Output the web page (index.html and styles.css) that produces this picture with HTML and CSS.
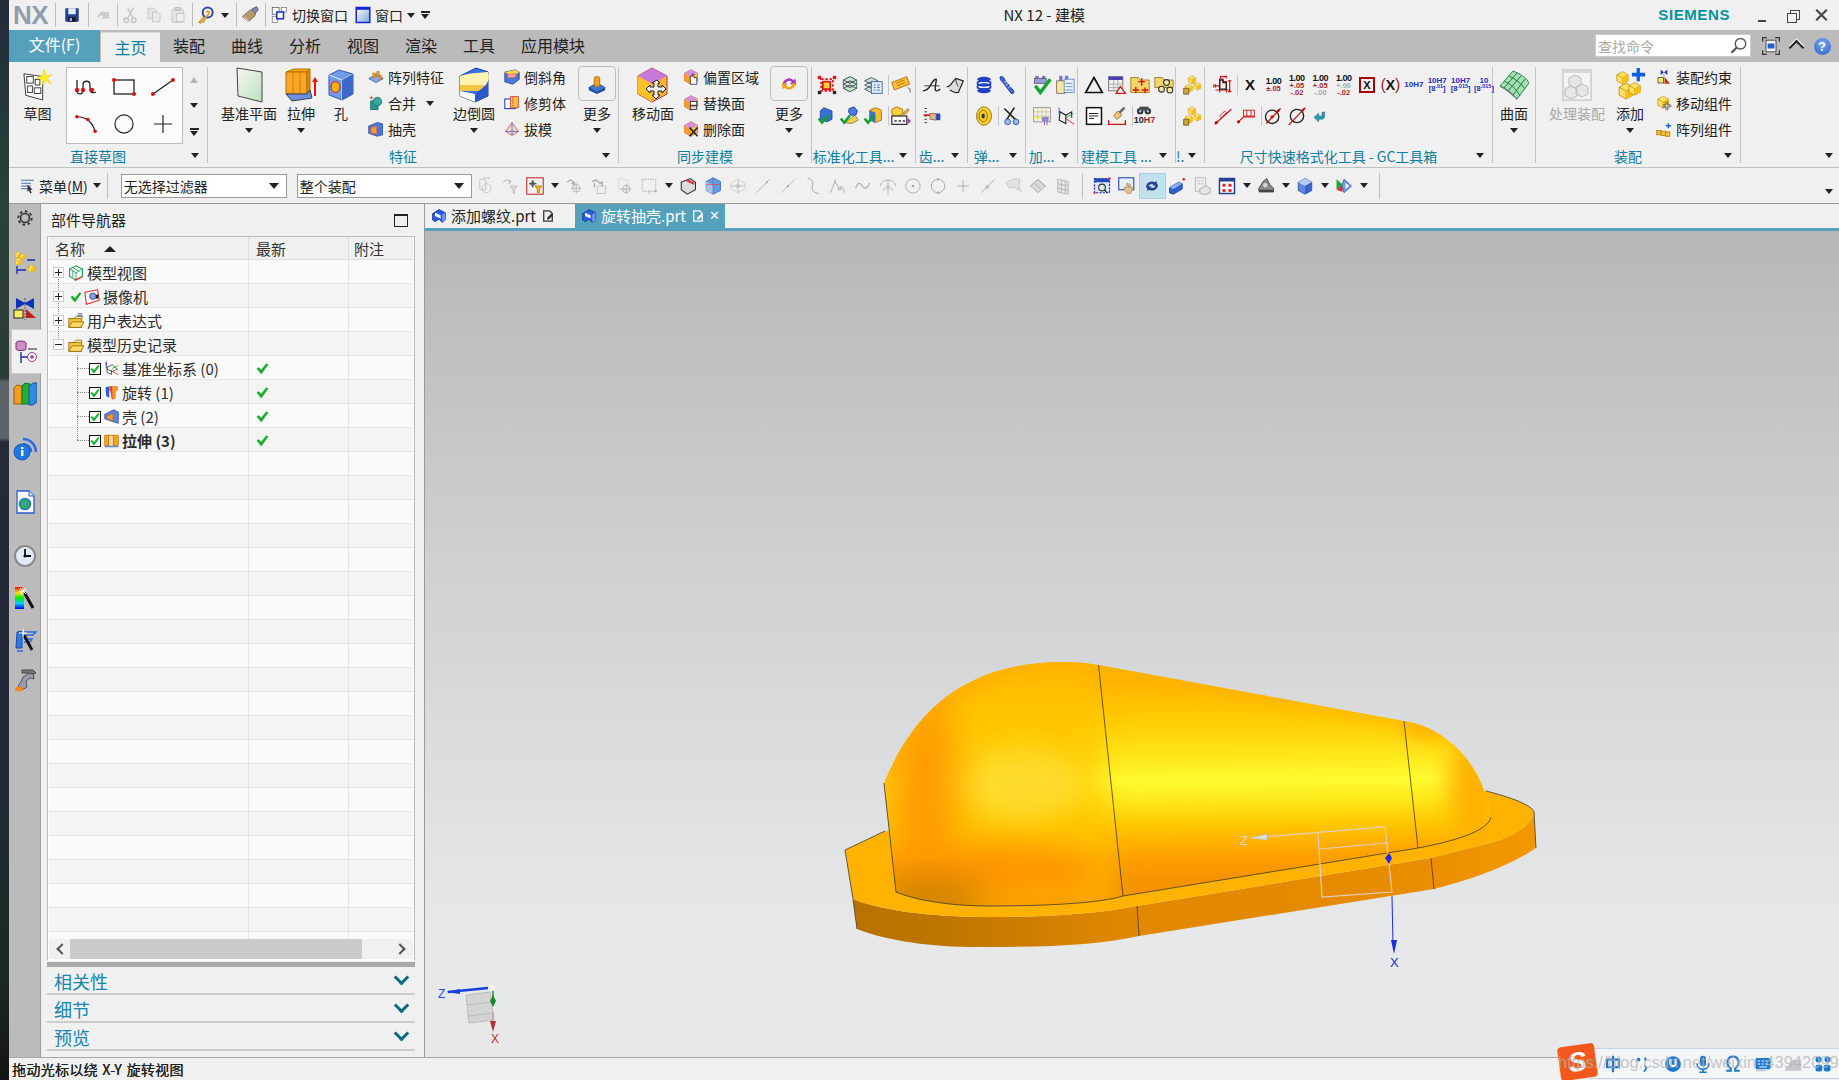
FILE: index.html
```html
<!DOCTYPE html>
<html lang="zh">
<head>
<meta charset="utf-8">
<title>NX 12 - 建模</title>
<link rel="stylesheet" href="styles.css">
</head>
<body>
<svg class="defs" aria-hidden="true">
<defs>
<linearGradient id="gPlane" x1="0" y1="0" x2="1" y2="1"><stop offset="0" stop-color="#f4f8f0"/><stop offset="1" stop-color="#bfe0c0"/></linearGradient>
<linearGradient id="gWin" x1="0" y1="0" x2="1" y2="1"><stop offset="0" stop-color="#fff"/><stop offset="1" stop-color="#7fa6d8"/></linearGradient>
</defs>
<symbol id="save" viewBox="0 0 24 24"><rect x="3" y="3" width="18" height="18" rx="1" fill="#24418f"/><rect x="7" y="3" width="10" height="8" fill="#e3ebf7"/><rect x="7" y="15" width="10" height="6" fill="#16181f"/><rect x="9" y="16" width="3" height="4" fill="#9fb0cc"/></symbol>
<symbol id="undo" viewBox="0 0 24 24"><path d="M6 15c0-6 6-9 11-5l2-2v8h-8l3-3c-3-2-6-1-8 2z" fill="#cfcfcf" stroke="#bbb"/></symbol>
<symbol id="cut" viewBox="0 0 24 24"><path d="M17 2L9 16M9 3l7 13" fill="none" stroke="#c4c4c4" stroke-width="2"/><circle cx="7" cy="19" r="3" fill="none" stroke="#c4c4c4" stroke-width="2"/><circle cx="17" cy="19" r="3" fill="none" stroke="#c4c4c4" stroke-width="2"/></symbol>
<symbol id="copy" viewBox="0 0 24 24"><path d="M4 3h8l3 3v11H4z" fill="#e6e6e6" stroke="#bdbdbd"/><path d="M10 8h7l3 3v10H10z" fill="#e9e9e9" stroke="#bdbdbd"/></symbol>
<symbol id="paste" viewBox="0 0 24 24"><rect x="4" y="4" width="15" height="18" rx="2" fill="#e4e4e4" stroke="#bdbdbd"/><rect x="8" y="2" width="7" height="4" fill="#d0d0d0" stroke="#b5b5b5"/><rect x="10" y="10" width="10" height="11" fill="#efefef" stroke="#bdbdbd"/></symbol>
<symbol id="touch" viewBox="0 0 24 24"><circle cx="14" cy="9" r="6" fill="none" stroke="#2b4aa8" stroke-width="2.4"/><path d="M12 9c2-3 5-1 3 2l-5 5" fill="none" stroke="#e0a81a" stroke-width="2"/><path d="M9 14l-6 7 3 1 2-2 1 1 2-4z" fill="#e8b62b" stroke="#8a6510" stroke-width=".7"/></symbol>
<symbol id="eraser" viewBox="0 0 24 24"><path d="M3 14l9-8 7 1-1 6-8 7z" fill="#b89a6a" stroke="#666"/><path d="M14 5l6-3 2 4-4 4z" fill="#7a8fb8" stroke="#555"/><path d="M5 15l6 5" stroke="#fff" /></symbol>
<symbol id="switch" viewBox="0 0 24 24"><rect x="3" y="2" width="9" height="9" fill="#fff" stroke="#555"/><rect x="15" y="2" width="7" height="6" fill="#fff" stroke="#777"/><rect x="3" y="14" width="7" height="8" fill="#fff" stroke="#777"/><rect x="9" y="8" width="9" height="9" fill="#fff" stroke="#1730c8" stroke-width="2"/></symbol>
<symbol id="winic" viewBox="0 0 24 24"><rect x="3" y="2" width="18" height="20" fill="url(#gWin)" stroke="#1226d0" stroke-width="2"/><rect x="3" y="2" width="18" height="3" fill="#1226d0"/></symbol>
<symbol id="sketch" viewBox="0 0 32 34"><path d="M1 5l20 3v25L3 28z" fill="#fff" stroke="#333"/><rect x="4" y="8" width="7" height="7" fill="#fff" stroke="#333"/><rect x="13" y="11" width="5" height="6" fill="#fff" stroke="#333"/><rect x="5" y="18" width="5" height="7" fill="#fff" stroke="#333"/><rect x="12" y="20" width="7" height="6" fill="#fff" stroke="#333"/><path d="M23 0l1 7 7-1-5 4 4 6-6-4-3 5-1-6-6-1 6-3z" fill="#ffee22" stroke="#e8c800" stroke-width=".5"/></symbol>
<symbol id="spline" viewBox="0 0 24 18"><path d="M3 2v11c0 4 6 4 6-1V7c0-5 7-5 7 0v5c0 3 4 3 6 2" fill="none" stroke="#222" stroke-width="1.3"/><g fill="#d11"><circle cx="3" cy="12" r="2.2"/><circle cx="9" cy="12" r="2.2"/><circle cx="18" cy="12" r="2.2"/></g></symbol>
<symbol id="srect" viewBox="0 0 24 18"><rect x="2" y="2" width="20" height="14" fill="none" stroke="#222" stroke-width="1.3"/><circle cx="2" cy="2" r="2" fill="#d11"/><circle cx="22" cy="16" r="2" fill="#d11"/></symbol>
<symbol id="sline" viewBox="0 0 24 18"><path d="M2 16L22 2" stroke="#222" stroke-width="1.3"/><circle cx="2" cy="16" r="2" fill="#d11"/><circle cx="22" cy="2" r="2" fill="#d11"/></symbol>
<symbol id="sarc" viewBox="0 0 24 22"><path d="M2 3c10 0 18 6 20 17" fill="none" stroke="#222" stroke-width="1.3"/><g fill="#d11"><circle cx="2" cy="3" r="2"/><circle cx="14" cy="6" r="2"/><circle cx="22" cy="19" r="2"/></g></symbol>
<symbol id="scirc" viewBox="0 0 24 22"><ellipse cx="12" cy="11" rx="10" ry="10" fill="none" stroke="#222" stroke-width="1.3"/></symbol>
<symbol id="splus" viewBox="0 0 24 22"><path d="M12 1v20M2 11h20" stroke="#222" stroke-width="1.3"/></symbol>
<symbol id="plane" viewBox="0 0 28 36"><path d="M2 1l25 4v30L3 29z" fill="url(#gPlane)" stroke="#444"/></symbol>
<symbol id="extr" viewBox="0 0 34 36"><path d="M2 5l8-3h16l-3 3z" fill="#f6a71c" stroke="#b76d00"/><path d="M2 5h21v22H2z" fill="#f9a825" stroke="#b76d00"/><path d="M9 5v22M16 5v22" stroke="#d57d00"/><path d="M23 5l3-3v21l-3 4z" fill="#e08a10" stroke="#b76d00"/><path d="M2 27h21l3-4 2 8-20 3z" fill="#6f8fe0" stroke="#345"/><path d="M31 29V13" stroke="#e11" stroke-width="2"/><path d="M28 15l3-5 3 5z" fill="#e11"/></symbol>
<symbol id="hole" viewBox="0 0 26 32"><path d="M1 6l10-5 14 4v20l-11 6-13-5z" fill="#6f9be8" stroke="#2f59b8"/><path d="M1 6l13 5 11-6M14 11v20" fill="none" stroke="#dfe9fb"/><path d="M14 11l11-6v20l-11 6z" fill="#3c68c8"/><ellipse cx="7.500" cy="18" rx="4.500" ry="5.500" fill="#ffb000" stroke="#d11"/></symbol>
<symbol id="blend" viewBox="0 0 32 36"><path d="M2 9L18 1l12 4v24l-13 6-15-6z" fill="#3c6fe0" stroke="#1b3fae"/><path d="M2 9c10-3 16-3 28-4 2 7 0 10-3 14l-25-1z" fill="#fff3b0"/><path d="M2 18h25l-4 6H2z" fill="#f5c542"/><path d="M2 24l15 3v8L2 29z" fill="#fff"/><path d="M17 27l10-8 3-2v12l-13 6z" fill="#2b58c9"/></symbol>
<symbol id="pat" viewBox="0 0 20 20"><path d="M1 12l9-5 9 5-9 5z" fill="#8fa8df" stroke="#36529f"/><path d="M6 5h3v6H6zM11 3h3v6h-3zM14 8h3v5h-3z" fill="#f59f1a" stroke="#a96500" stroke-width=".6"/></symbol>
<symbol id="unite" viewBox="0 0 20 24"><rect x="2" y="9" width="11" height="13" fill="#1f9a92" stroke="#0b5c56"/><circle cx="12" cy="10" r="6.500" fill="#35a89f" stroke="#0b5c56"/><path d="M3 1v6M0 4h6" stroke="#e11"/></symbol>
<symbol id="shell" viewBox="0 0 22 22"><path d="M1 7l12-5 7 2v15l-7 2-12-4z" fill="#4b78d8" stroke="#23408e"/><path d="M4 9l8-2v11l-8-2z" fill="#f59b2a" stroke="#b66"/></symbol>
<symbol id="cham" viewBox="0 0 20 20"><path d="M1 4l13-3 5 3v9l-8 6-10-3z" fill="#4b78d8" stroke="#1e3f9a"/><path d="M1 4l13-3 5 3-9 5z" fill="#ffd24a"/><path d="M4 7l12-1-2 5H5z" fill="#f7a6a6" stroke="#d33" stroke-width=".6"/></symbol>
<symbol id="trim" viewBox="0 0 20 20"><rect x="1" y="5" width="13" height="12" fill="#fff" stroke="#2548c8" stroke-width="1.400"/><path d="M8 2h10v14H8z" fill="#f7c04a" stroke="#c44" stroke-width="1.100"/><path d="M11 3v12" stroke="#d33" stroke-dasharray="2 1"/></symbol>
<symbol id="draft" viewBox="0 0 20 20"><path d="M10 2L2 13l8 5 8-5z" fill="#f7d9c7" stroke="#d44"/><path d="M10 2v16" stroke="#36c"/><path d="M2 13h16" stroke="#36c"/></symbol>
<symbol id="hexp" viewBox="0 0 22 22"><path d="M11 1l9 5v10l-9 5-9-5V6z" fill="#ffc547" stroke="#b57"/><path d="M2 6l9 5v10l-9-5z" fill="#ff9c20"/><path d="M11 1l9 5-9 5-9-5z" fill="#d78fd8"/></symbol>
<symbol id="hoff" viewBox="0 0 22 22"><use href="#hexp" width="22" height="22"/><path d="M10 10h3V7h2v5h4v9h-9z" fill="#fff" stroke="#111"/></symbol>
<symbol id="hrep" viewBox="0 0 22 22"><use href="#hexp" width="22" height="22"/><rect x="10" y="9" width="9" height="5" fill="#fff" stroke="#111"/><rect x="10" y="15" width="9" height="5" fill="#ddd" stroke="#111"/></symbol>
<symbol id="hdel" viewBox="0 0 22 22"><use href="#hexp" width="22" height="22"/><path d="M9 9l11 12M20 9L9 21" stroke="#222" stroke-width="2.200"/></symbol>
<symbol id="cube" viewBox="0 0 24 24"><path d="M12 2l9 5v10l-9 5-9-5V7z" fill="#ffe164" stroke="#b58400"/><path d="M3 7l9 5 9-5M12 12v10" fill="none" stroke="#b58400"/><path d="M12 12l9-5v10l-9 5z" fill="#f8be13"/></symbol>
<symbol id="move" viewBox="0 0 32 36"><path d="M15 1l15 8v18l-15 8-14-8V9z" fill="#ffb52e" stroke="#a35"/><path d="M15 1l15 8-15 8L1 9z" fill="#c779d8"/><path d="M1 9l14 8v18L1 27z" fill="#ffc028"/><path d="M20 14l3 3-2 0v4h4v-2l4 4-4 4v-2h-4v4h2l-4 4-4-4h2v-4h-4v2l-4-4 4-4v2h4v-4h-2z" transform="translate(0 -1)" fill="#f0f0f0" stroke="#222"/></symbol>
<symbol id="more1" viewBox="0 0 22 22"><path d="M2 15l9-5 9 5-9 5z" fill="#3f79d8" stroke="#1d4492"/><rect x="8" y="3" width="6" height="11" rx="2" fill="#f59f1a" stroke="#b56b00"/><path d="M2 15v3l9 4 9-4v-3l-9 5z" fill="#1d4fa8"/></symbol>
<symbol id="more2" viewBox="0 0 22 22"><path d="M4 12a7 7 0 0 1 12-5l2-2 1 7-7-1 2-2a4 4 0 0 0-7 3z" fill="#a63ab8"/><path d="M18 10a7 7 0 0 1-12 5l-2 2-1-7 7 1-2 2a4 4 0 0 0 7-3z" fill="#f0a21a"/></symbol>
<symbol id="a1" viewBox="0 0 24 24"><path d="M5 5h14v14H5z" fill="none" stroke="#e11" stroke-width="2" stroke-dasharray="3 2"/><rect x="1" y="1" width="4" height="4" fill="#e11"/><rect x="19" y="1" width="4" height="4" fill="#e11"/><rect x="1" y="19" width="4" height="4" fill="#222"/><rect x="19" y="19" width="4" height="4" fill="#222"/><rect x="7" y="8" width="9" height="9" fill="#ffd23c" stroke="#d11" stroke-width="2"/></symbol>
<symbol id="a2" viewBox="0 0 24 24"><path d="M4 6l8-4 8 4-8 4zM4 11l8-4 8 4-8 4zM4 16l8-4 8 4-8 4z" fill="#cfe4c8" stroke="#234" stroke-width="1"/><path d="M4 6v10M20 6v10" stroke="#264"/></symbol>
<symbol id="a3" viewBox="0 0 24 24"><path d="M2 7l8-4 8 4-8 4zM2 12l8-4 8 4-8 4zM2 17l8-4 8 4-8 4z" fill="#cfe0d8" stroke="#345"/><rect x="10" y="8" width="13" height="14" fill="#dfe9f7" stroke="#2f5ca8"/><path d="M13 12h2M17 12h3M13 15h2M17 15h3M13 18h2M17 18h3" stroke="#2f5ca8"/></symbol>
<symbol id="a4" viewBox="0 0 24 24"><path d="M1 9l18-7 3 9-18 7z" fill="#ffc233" stroke="#a66400"/><path d="M6 10l10-4M7 13l10-4" stroke="#a66400"/><path d="M20 15l3 2v4" stroke="#555" fill="none"/></symbol>
<symbol id="b1" viewBox="0 0 24 24"><path d="M8 2l10 4v10l-6 3-8-3V6z" fill="#3a70d8" stroke="#183f96"/><path d="M2 15l4 5 8-9" fill="none" stroke="#0ca52a" stroke-width="3"/></symbol>
<symbol id="b2" viewBox="0 0 24 24"><path d="M11 3l6-2 4 5-2 5h-6l-3-4z" fill="#4a78df" stroke="#1e3f9a"/><path d="M6 20l12-9 4 6-8 4z" fill="#ffd23c" stroke="#777"/><path d="M1 15l4 5 7-9" fill="none" stroke="#0ca52a" stroke-width="3"/></symbol>
<symbol id="b3" viewBox="0 0 24 24"><path d="M8 5l7-3 7 3v12l-7 3-7-3z" fill="#ffbe2e" stroke="#a56b00"/><path d="M8 5l7 3v12l-7-3z" fill="#3a70d8"/><path d="M2 15l4 5 7-9" fill="none" stroke="#0ca52a" stroke-width="3"/></symbol>
<symbol id="b4" viewBox="0 0 24 24"><path d="M7 1l7 3v6l-7 3-6-3V4z" fill="#ffd23c" stroke="#a56b00"/><rect x="1" y="12" width="18" height="10" fill="#fff" stroke="#222" stroke-width="1.400"/><path d="M4 17h3v2H4zM9 17h3v2H9zM14 17h3v2h-3z" fill="#333"/><path d="M20 14l4 4-4 4z" fill="#a12fb8"/><path d="M14 9l6-6 2 2-6 6z" fill="#e8a83a" stroke="#555" stroke-width=".6"/></symbol>
<symbol id="c1" viewBox="0 0 24 24"><path d="M1 19c5 0 8-4 10-8s5-6 6-6-3 14 0 14 3-1 5-2" fill="none" stroke="#222" stroke-width="1.600"/><path d="M3 13h18" stroke="#222"/></symbol>
<symbol id="c2" viewBox="0 0 24 24"><path d="M2 14c4 1 6-5 11-10l9 3-6 14c-5 1-8-2-10-3" fill="#ddd" stroke="#222" stroke-width="1.400"/><path d="M13 4c0 5 2 8 3 10" stroke="#222" fill="none"/></symbol>
<symbol id="c3" viewBox="0 0 24 24"><path d="M3 3h3M3 7h3M3 12h3M3 16h3M3 20h3" stroke="#222"/><path d="M2 11h8" stroke="#d11" stroke-width="2"/><path d="M9 9h8v8l-7-1z" fill="#e5b58c" stroke="#8a6340"/><rect x="17" y="9" width="5" height="8" fill="#2748b8"/></symbol>
<symbol id="d1" viewBox="0 0 24 24"><ellipse cx="12" cy="5" rx="8" ry="3" fill="#1f3fc8"/><ellipse cx="12" cy="10" rx="8" ry="3" fill="none" stroke="#1f3fc8" stroke-width="2"/><ellipse cx="12" cy="14" rx="8" ry="3" fill="none" stroke="#1f3fc8" stroke-width="2"/><ellipse cx="12" cy="19" rx="8" ry="3" fill="#1f3fc8"/></symbol>
<symbol id="d2" viewBox="0 0 24 24"><path d="M4 2c3-1 5 2 6 5l10 12c1 3-1 4-3 3L7 9C4 6 3 4 4 2z" fill="#3b6be0" stroke="#12308a"/><path d="M9 9l3-2M11 12l3-2M14 15l3-2" stroke="#fff"/></symbol>
<symbol id="d3" viewBox="0 0 24 24"><ellipse cx="12" cy="12" rx="9" ry="11" fill="#f7cf2a" stroke="#8a6c00"/><ellipse cx="11" cy="12" rx="5" ry="7" fill="none" stroke="#7d6100"/><ellipse cx="11" cy="12" rx="2" ry="3" fill="#333"/></symbol>
<symbol id="d4" viewBox="0 0 24 24"><path d="M4 3l14 14M16 2L7 16" stroke="#222" stroke-width="2"/><circle cx="8" cy="19" r="3.500" fill="#9cb4e8" stroke="#2f4fa8"/><circle cx="18" cy="19" r="3.500" fill="#9cb4e8" stroke="#2f4fa8"/></symbol>
<symbol id="e1" viewBox="0 0 24 24"><rect x="4" y="1" width="4" height="5" fill="#7a78c8"/><rect x="12" y="1" width="4" height="5" fill="#7a78c8"/><rect x="3" y="4" width="14" height="6" fill="#9c9ad8" stroke="#556"/><path d="M4 13l6 8L22 5" fill="none" stroke="#11a52c" stroke-width="4"/></symbol>
<symbol id="e2" viewBox="0 0 24 24"><rect x="5" y="1" width="4" height="7" fill="#7a78c8"/><rect x="12" y="1" width="4" height="7" fill="#7a78c8"/><rect x="2" y="7" width="10" height="15" fill="#ffe69a" stroke="#666"/><rect x="11" y="5" width="12" height="16" fill="#e8f0fa" stroke="#5e82c0"/><path d="M13 10h8M13 14h8M13 18h8" stroke="#5e82c0"/></symbol>
<symbol id="e3" viewBox="0 0 24 24"><rect x="2" y="2" width="20" height="17" fill="#fbf6d8" stroke="#888"/><path d="M2 7h20M2 12h20M7 2v17M12 2v17M17 2v17" stroke="#bbb"/><path d="M2 14h15" stroke="#ee4" stroke-width="2"/><rect x="12" y="13" width="8" height="5" fill="#8a86d0"/><path d="M15 18v5M18 18v5" stroke="#a039b8"/></symbol>
<symbol id="e4" viewBox="0 0 24 24"><path d="M6 7l7 4v10l-8-4z" fill="#eee" stroke="#222" stroke-width="1.300"/><path d="M13 11l7-4v7" fill="none" stroke="#222" stroke-width="1.300"/><path d="M5 2v8" stroke="#1b3fd0"/><path d="M13 14l9-5" stroke="#0aa02c"/><path d="M13 15l10 7" stroke="#d11"/></symbol>
<symbol id="f1" viewBox="0 0 24 24"><path d="M12 3L2 21h20z" fill="none" stroke="#111" stroke-width="2"/></symbol>
<symbol id="f2" viewBox="0 0 24 24"><rect x="2" y="2" width="17" height="17" fill="#eee" stroke="#666"/><rect x="2" y="2" width="17" height="4" fill="#4a3fb8"/><path d="M2 11h17M2 15h17M8 6v13M13 6v13" stroke="#aaa"/><path d="M16 14l6 8H11z" fill="#fff" stroke="#d11" stroke-width="1.600"/></symbol>
<symbol id="f3" viewBox="0 0 24 24"><path d="M1 3h9l2 3h11v15H1z" fill="#f2d66a" stroke="#9a7a10"/><path d="M14 4v9M10 8h8M7 14v8M3 18h8M18 15v7M14 18h8" stroke="#d11" stroke-width="1.600"/></symbol>
<symbol id="f4" viewBox="0 0 24 24"><path d="M1 3h9l2 3h11v9H1z" fill="#f2d66a" stroke="#9a7a10"/><circle cx="15" cy="9" r="3.500" fill="#f7e8a8" stroke="#333" stroke-width="1.300"/><circle cx="9" cy="17" r="3.500" fill="#f7e8a8" stroke="#333" stroke-width="1.300"/><circle cx="19" cy="18" r="3.500" fill="#f7e8a8" stroke="#333" stroke-width="1.300"/></symbol>
<symbol id="f5" viewBox="0 0 24 24"><rect x="3" y="2" width="18" height="20" fill="#fff" stroke="#111" stroke-width="1.800"/><path d="M6 9h11M6 12h11M6 15h6" stroke="#222" stroke-width="1.300"/></symbol>
<symbol id="f6" viewBox="0 0 24 24"><path d="M21 2l-6 6" stroke="#666" stroke-width="3"/><path d="M8 12l5-6 5 5-6 5z" fill="#ecc974" stroke="#8a6a30"/><path d="M1 22h22M2 17v6M22 17v6" stroke="#c11" stroke-width="1.600"/></symbol>
<symbol id="binoc" viewBox="0 0 24 14"><circle cx="6" cy="8" r="5" fill="#333"/><circle cx="18" cy="8" r="5" fill="#333"/><rect x="5" y="1" width="14" height="6" fill="#4a4a4a"/><circle cx="6" cy="8" r="2" fill="#8fb0e0"/><circle cx="18" cy="8" r="2" fill="#8fb0e0"/></symbol>
<symbol id="cubes" viewBox="0 0 24 24"><use href="#cube" x="6" y="0" width="12" height="12"/><use href="#cube" x="13" y="8" width="11" height="11"/><use href="#cube" x="2" y="10" width="12" height="12"/><path d="M2 16h6v7H2z" fill="#c9a83c" stroke="#6c5a1a"/></symbol>
<symbol id="g1" viewBox="0 0 24 24"><path d="M8 5h4v3h4v10H8zM3 13h5M3 18h18M8 21v-3M16 21v-3M20 7v13M22 7h-4M22 20h-4M9 2h7M9 4V1M16 4V1M1 11v4M3 11v4" fill="none" stroke="#c11" stroke-width="1.400"/><path d="M8 6h4v3h4v8H8z" fill="none" stroke="#222" stroke-width="1.500"/></symbol>
<symbol id="g2" viewBox="0 0 24 24"><path d="M2 22L22 4" stroke="#c11" stroke-width="1.500"/><circle cx="4" cy="20" r="2" fill="#c11"/><path d="M8 12l6-6 2 2-6 6z" fill="none" stroke="#c11"/></symbol>
<symbol id="g3" viewBox="0 0 24 24"><path d="M2 20l7-7h14" stroke="#c11" stroke-width="1.500" fill="none"/><circle cx="3" cy="19" r="2" fill="#c11"/><rect x="9" y="5" width="13" height="7" fill="none" stroke="#c11"/><path d="M13 5v7M18 5v7" stroke="#c11"/></symbol>
<symbol id="g4" viewBox="0 0 24 24"><circle cx="11" cy="13" r="8" fill="none" stroke="#222" stroke-width="1.600"/><path d="M4 21L21 3" stroke="#c11" stroke-width="1.500"/><path d="M21 3l-5 2 3 3z" fill="#c11"/><circle cx="11" cy="13" r="2" fill="#c11"/></symbol>
<symbol id="g5" viewBox="0 0 24 24"><ellipse cx="12" cy="12" rx="8" ry="8" fill="none" stroke="#222" stroke-width="1.600"/><path d="M2 23L22 2" stroke="#c11" stroke-width="1.500"/><path d="M22 2l-5 2 3 3z" fill="#c11"/></symbol>
<symbol id="g6" viewBox="0 0 24 24"><path d="M19 6v7c0 3-3 4-6 4H10v4l-7-7 7-6v4h3c1 0 2-1 2-2V6z" fill="#2a9cae" stroke="#136"  stroke-width=".5"/></symbol>
<symbol id="surf" viewBox="0 0 32 32"><path d="M2 17L15 2c7 3 13 6 16 12L19 30C14 24 8 19 2 17z" fill="#a5e0b0" stroke="#2a8a55"/><path d="M6 12c6 3 12 7 16 15M11 7c6 3 12 7 16 13M19 4L6 19M23 7L10 22M27 10L15 26" fill="none" stroke="#1f7a48"/><path d="M2 17c6 2 12 7 17 13v1C13 25 7 20 2 18z" fill="#777"/></symbol>
<symbol id="asmg" viewBox="0 0 30 32"><rect x="0" y="0" width="30" height="32" fill="#d8d8d8" stroke="#ccc"/><rect x="2" y="4" width="26" height="26" fill="#f4f4f4"/><path d="M13 6l6 3v7l-6 3-6-3V9z M20 15l6 3v7l-6 3-6-3v-7z M9 17l6 3v7l-6 3-6-3v-7z" fill="#e6e6e6" stroke="#bbb"/></symbol>
<symbol id="addc" viewBox="0 0 32 36"><use href="#cube" x="0" y="2" width="16" height="17"/><use href="#cube" x="2" y="14" width="20" height="21"/><use href="#cube" x="13" y="14" width="16" height="16"/><path d="M23 0h3.500v5H32v4h-5.500v5H23V9h-5V5h5z" fill="#0a5fe0"/></symbol>
<symbol id="constr" viewBox="0 0 20 24"><path d="M5 1l5 4 5-4v8l-5-4-5 4z" fill="#1f33a8"/><path d="M10 8v15" stroke="#555" stroke-dasharray="2 1"/><rect x="1" y="13" width="8" height="8" fill="#ffea66" stroke="#222"/><path d="M11 12l8 10h-8z" fill="#b31"/></symbol>
<symbol id="mvc" viewBox="0 0 22 22"><use href="#cube" x="0" y="0" width="20" height="20"/><path d="M15 9l2 2h-1v3h3v-1l2 2-2 2v-1h-3v3h1l-2 2-2-2h1v-3h-3v1l-2-2 2-2v1h3v-3h-1z" fill="#fff" stroke="#111" stroke-width=".8"/></symbol>
<symbol id="arrc" viewBox="0 0 22 22"><g fill="#f8c33a" stroke="#a57400"><rect x="1" y="13" width="6" height="6"/><rect x="7" y="14" width="6" height="6"/><rect x="13" y="15" width="6" height="6"/></g><path d="M17 3v7M13.500 6.500h7" stroke="#0a5fe0" stroke-width="1.800"/></symbol>
<symbol id="menuic" viewBox="0 0 24 24"><path d="M3 4h18M3 8h14M3 12h14M3 16h14" stroke="#4070a8" stroke-width="1.500"/><path d="M12 10l7 7-3 .5 2 4-2 1-2-4-2 2z" fill="#333"/></symbol>
<symbol id="t1" viewBox="0 0 24 24"><path d="M5 3h8v14H5zM9 3l3-2h6l-2 2" fill="none" stroke="#bbb"/><circle cx="14" cy="15" r="6" fill="none" stroke="#bbb"/></symbol>
<symbol id="t2" viewBox="0 0 24 24"><path d="M3 7c3-4 7-4 9 0M10 9l3-3-3-2" fill="none" stroke="#bbb" stroke-width="1.500"/><path d="M12 12h10l-4 5v5h-2v-5z" fill="#d8d8d8" stroke="#bbb"/></symbol>
<symbol id="t3" viewBox="0 0 24 24"><rect x="1" y="1" width="22" height="22" fill="none" stroke="#c33" stroke-width="1.500"/><path d="M9 4v10M4 9h10" stroke="#333" stroke-width="1.300"/><circle cx="9" cy="9" r="2.500" fill="none" stroke="#333"/><path d="M12 12h9l-3 4v5h-3v-5z" fill="#f5b820" stroke="#a57400"/></symbol>
<symbol id="t4" viewBox="0 0 24 24"><path d="M3 7c3-4 7-4 9 1M9 8l3 2 1-3" fill="none" stroke="#aaa" stroke-width="1.500"/><circle cx="15" cy="15" r="5" fill="none" stroke="#aaa"/><path d="M15 8v14M8 15h14" stroke="#aaa"/></symbol>
<symbol id="t5" viewBox="0 0 24 24"><path d="M3 6l5-2 5 4 3-1v6M6 8v6" fill="none" stroke="#aaa" stroke-width="2"/><rect x="10" y="12" width="11" height="10" fill="none" stroke="#bbb"/></symbol>
<symbol id="t6" viewBox="0 0 24 24"><path d="M5 2l12 2v14l-12-2z" fill="none" stroke="#c5c5c5" stroke-dasharray="2 1"/><circle cx="15" cy="16" r="5" fill="none" stroke="#aaa"/><path d="M15 9v14M8 16h14" stroke="#aaa"/></symbol>
<symbol id="t7" viewBox="0 0 24 24"><rect x="3" y="3" width="18" height="16" fill="none" stroke="#999" stroke-dasharray="2 1.500"/><path d="M12 18v5" stroke="#aaa"/><circle cx="21" cy="19" r="1.500" fill="#aaa"/></symbol>
<symbol id="t8" viewBox="0 0 24 24"><path d="M3 7l12-5 7 5v10l-11 6-8-6z" fill="#ddd" stroke="#333" stroke-width="1.400"/><path d="M10 4l10 5" stroke="#d33" stroke-width="3"/></symbol>
<symbol id="t9" viewBox="0 0 24 24"><path d="M3 6l9-5 10 5v12l-10 5-9-5z" fill="#58a0e8" stroke="#2a66b8"/><path d="M3 6l9 5v12l-9-5z" fill="#9cc8f0"/><path d="M12 1v22M3 10h19" stroke="#e34" stroke-width=".8"/></symbol>
<symbol id="t10" viewBox="0 0 24 24"><path d="M3 8l9-5 9 5v8l-9 5-9-5z" fill="none" stroke="#bbb" stroke-dasharray="2 1"/><circle cx="12" cy="12" r="3" fill="#ccc"/><path d="M12 2v20M2 12h20" stroke="#c4c4c4" stroke-width="1.500"/></symbol>
<symbol id="t11" viewBox="0 0 24 24"><path d="M3 21L21 3" stroke="#aaa"/><circle cx="17" cy="7" r="1.500" fill="#aaa"/></symbol>
<symbol id="t12" viewBox="0 0 24 24"><path d="M3 21L21 3" stroke="#aaa"/><circle cx="12" cy="12" r="1.500" fill="#aaa"/></symbol>
<symbol id="t13" viewBox="0 0 24 24"><path d="M5 2c8 0 7 7 6 10s0 9 9 10" fill="none" stroke="#aaa" stroke-width="1.300"/></symbol>
<symbol id="t14" viewBox="0 0 24 24"><path d="M2 21L8 6l6 10 3-4 4 9M8 3v5" fill="none" stroke="#aaa" stroke-width="1.200"/><circle cx="14" cy="16" r="2" fill="none" stroke="#aaa"/></symbol>
<symbol id="t15" viewBox="0 0 24 24"><path d="M2 15c3-8 6-8 9-3s7 3 10-4" fill="none" stroke="#aaa" stroke-width="1.500"/></symbol>
<symbol id="t16" viewBox="0 0 24 24"><path d="M2 12a10 8 0 0 1 20 0M12 3v20M12 12L5 18M12 12l7 6" fill="none" stroke="#aaa" stroke-width="1.200"/></symbol>
<symbol id="t17" viewBox="0 0 24 24"><circle cx="12" cy="12" r="9.500" fill="none" stroke="#aaa" stroke-width="1.200"/><circle cx="12" cy="12" r="1.800" fill="#aaa"/></symbol>
<symbol id="t18" viewBox="0 0 24 24"><circle cx="12" cy="12" r="9" fill="none" stroke="#aaa" stroke-width="1.300"/><circle cx="12" cy="3" r="2" fill="#bbb"/><circle cx="12" cy="21" r="2" fill="#bbb"/></symbol>
<symbol id="t19" viewBox="0 0 24 24"><path d="M12 4v16M4 12h16" stroke="#aaa" stroke-width="1.200"/></symbol>
<symbol id="t20" viewBox="0 0 24 24"><path d="M3 21L21 3" stroke="#aaa" stroke-width="1.200"/><circle cx="11" cy="13" r="2.500" fill="#bbb"/></symbol>
<symbol id="t21" viewBox="0 0 24 24"><path d="M3 8c6-5 12-6 18-5l-2 15c-2-4-8-6-12-3z" fill="#e4e4e4" stroke="#bbb"/><path d="M19 14l4 3-2 4" fill="none" stroke="#bbb"/></symbol>
<symbol id="t22" viewBox="0 0 24 24"><path d="M2 12l10-9 10 9-10 9z" fill="#d9d9d9" stroke="#aaa"/><path d="M7 8l10 9M12 4l10 9M2 12l10-9" stroke="#aaa"/></symbol>
<symbol id="t23" viewBox="0 0 24 24"><path d="M5 3l14 3v17l-14-3zM10 4v17M15 5v17M5 9l14 3M5 15l14 3" fill="#e6e6e6" stroke="#aaa"/></symbol>
<symbol id="v1" viewBox="0 0 24 24"><rect x="2" y="2" width="20" height="19" fill="#dce8f8" stroke="#1630c0" stroke-dasharray="3 1.500" stroke-width="1.500"/><rect x="2" y="2" width="20" height="5" fill="#2748b8"/><circle cx="12" cy="14" r="4.500" fill="none" stroke="#333" stroke-width="1.500"/><path d="M15 17l4 4" stroke="#333" stroke-width="2"/><circle cx="22" cy="2" r="1.600" fill="#d33"/><circle cx="2" cy="21" r="1.600" fill="#d33"/></symbol>
<symbol id="v2" viewBox="0 0 24 24"><rect x="1" y="1" width="20" height="16" fill="#e6eefa" stroke="#2d4fa8" stroke-width="1.500"/><path d="M12 22c-3-4-5-7-4-8s2 0 3 1l1-7 1 0 1 6 1-5 1 0 1 6 1-2c2 0 1 6-1 9z" fill="#e8bf90" stroke="#a5753f" stroke-width=".7"/></symbol>
<symbol id="v3" viewBox="0 0 24 24"><path d="M4 14a8 8 0 0 1 12-7l2-2 1 7-7-1 2-1.500A6 6 0 0 0 6.500 14z" fill="#24408e"/><path d="M20 10a8 8 0 0 1-12 7l-2 2-1-7 7 1-2 1.500a6 6 0 0 0 7.500-4.500z" fill="#24408e"/></symbol>
<symbol id="v4" viewBox="0 0 24 24"><path d="M2 14l12-7 5 2v7l-12 7-5-2z" fill="#2e5fd0" stroke="#17398a"/><path d="M14 7l5 2-12 7-5-2z" fill="#8db0ee"/><circle cx="21" cy="3" r="1.700" fill="#e11"/></symbol>
<symbol id="v5" viewBox="0 0 24 24"><rect x="3" y="1" width="14" height="18" fill="#eee" stroke="#aaa"/><path d="M6 5h3M11 5h3M6 9h3M11 9h3" stroke="#aaa"/><path d="M9 16l8-4 6 3v6l-8 3-6-3z" fill="#e6e6e6" stroke="#999"/></symbol>
<symbol id="v6" viewBox="0 0 24 24"><rect x="2" y="2" width="20" height="20" fill="#fff" stroke="#24408e" stroke-width="2"/><rect x="2" y="2" width="20" height="4" fill="#24408e"/><g fill="#e22"><rect x="6" y="9" width="4" height="4"/><rect x="14" y="9" width="4" height="4"/><rect x="6" y="16" width="4" height="4"/><rect x="14" y="16" width="4" height="4"/></g></symbol>
<symbol id="v7" viewBox="0 0 24 24"><path d="M2 16l6-10 5-4 4 8 5 5v5H3z" fill="#8a8a8a" stroke="#333"/><path d="M3 17h19v3H3z" fill="#444"/><circle cx="11" cy="11" r="3" fill="#d8d8d8"/></symbol>
<symbol id="v8" viewBox="0 0 24 24"><path d="M3 7l9-5 9 5v11l-9 5-9-5z" fill="#5c86e8" stroke="#2748a8"/><path d="M3 7l9 5 9-5-9-5z" fill="#b6ccf8"/><path d="M12 12l9-5v11l-9 5z" fill="#3a62c8"/></symbol>
<symbol id="v9" viewBox="0 0 24 24"><path d="M2 3l8 7-8 7z" fill="#20a838"/><path d="M2 17l8-7v10z" fill="#e03030"/><path d="M12 3l10 9-10 9-3-9z" fill="#6fa0e8" stroke="#2748a8"/><path d="M14 8l5 4-5 4z" fill="#fff"/></symbol>
<symbol id="docic" viewBox="0 0 20 20"><path d="M2 7l8-5 8 4v9l-4 3-4-4-5 3-3-2z" fill="#2a5ce0" stroke="#122f8f"/><path d="M5 6l7 3v4l-7-3z" fill="#fff"/><path d="M14 8l4-2v9l-4 3z" fill="#6d96f0"/></symbol>
<symbol id="docm" viewBox="0 0 14 14"><path d="M2 1h7l3 3v9H2z" fill="none" stroke="currentColor" stroke-width="1.500"/><path d="M6 9l5-5 2 2-5 5H6z" fill="currentColor"/></symbol>
<symbol id="gear" viewBox="0 0 24 24"><circle cx="12" cy="12" r="6" fill="none" stroke="#333" stroke-width="2.200"/><circle cx="12" cy="12" r="9" fill="none" stroke="#333" stroke-width="2.400" stroke-dasharray="3.500 3.500"/></symbol>
<symbol id="r1" viewBox="0 0 24 24"><use href="#cube" x="1" y="0" width="8" height="8"/><use href="#cube" x="6" y="2" width="7" height="7"/><use href="#cube" x="1" y="6" width="9" height="9"/><use href="#cube" x="14" y="13" width="9" height="9"/><path d="M4 15v8M4 19h9M14 9h8" stroke="#1c2bb0" stroke-width="1.300" fill="none"/></symbol>
<symbol id="r2" viewBox="0 0 24 24"><path d="M3 2l9 5 9-5v11l-9-5-9 5z" fill="#0f2fc0"/><path d="M12 2v22" stroke="#555" stroke-dasharray="2 1"/><rect x="1" y="14" width="9" height="8" fill="#ffea66" stroke="#222"/><path d="M13 13l10 9H13z" fill="#b8231a"/></symbol>
<symbol id="r3" viewBox="0 0 24 24"><ellipse cx="6" cy="3" rx="5" ry="2" fill="#cc8ec0" stroke="#7a2b78"/><path d="M1 3v6c0 2 10 2 10 0V3" fill="#cc8ec0" stroke="#7a2b78"/><path d="M13 9h9" stroke="#222"/><path d="M6 12v11M6 17h7" stroke="#1c2bb0" stroke-width="1.400" fill="none"/><circle cx="17" cy="17" r="4.500" fill="none" stroke="#a0408f"/><circle cx="17" cy="17" r="1.800" fill="#a0408f"/></symbol>
<symbol id="r4" viewBox="0 0 24 24"><path d="M1 6l3-3 5 1v18H1z" fill="#f59b20" stroke="#a15b00"/><path d="M9 4l3-3 5 1v20H9z" fill="#20b030" stroke="#0a7a18"/><path d="M16 4l4-3h4v19l-4 3h-4z" fill="#2f8ae0" stroke="#1457a0"/></symbol>
<symbol id="r5" viewBox="0 0 24 24"><path d="M10 2a13 13 0 0 1 13 13M10 7a8 8 0 0 1 8 8" fill="none" stroke="#2f6ae0" stroke-width="2.600"/><circle cx="9" cy="15" r="8" fill="#1e78e0" stroke="#1257b8"/><rect x="8" y="13" width="2.400" height="6" fill="#fff"/><rect x="8" y="10" width="2.400" height="2" fill="#fff"/></symbol>
<symbol id="r6" viewBox="0 0 24 24"><path d="M4 1h12l5 5v17H4z" fill="#fff" stroke="#2a5ad0" stroke-width="1.300"/><path d="M16 1v5h5" fill="#dbe6fa" stroke="#2a5ad0"/><circle cx="12" cy="14" r="5.500" fill="#2eb04a" stroke="#2a7ad0" stroke-width="1.600"/><path d="M10 12c2-2 3 0 4 2-1 2-3 2-4 0z" fill="#4a8ee0"/></symbol>
<symbol id="r7" viewBox="0 0 24 24"><circle cx="12" cy="12" r="11" fill="#8a8a8a"/><circle cx="12" cy="12" r="9" fill="#dfeafa"/><path d="M12 5v7h6" fill="none" stroke="#111" stroke-width="1.800"/><circle cx="12" cy="12" r="1.600" fill="#111"/></symbol>
<symbol id="r8" viewBox="0 0 24 24"><defs><linearGradient id="gRb" x1="0" y1="0" x2="0" y2="1"><stop offset="0" stop-color="#f00"/><stop offset=".25" stop-color="#fd0"/><stop offset=".5" stop-color="#0e0"/><stop offset=".75" stop-color="#0cf"/><stop offset="1" stop-color="#00d"/></linearGradient></defs><rect x="2" y="1" width="9" height="22" fill="url(#gRb)"/><path d="M11 6l9 16" stroke="#111" stroke-width="3"/><path d="M10 1v8M6 5h8M7 2l6 6M13 2l-6 6" stroke="#fff"/></symbol>
<symbol id="r9" viewBox="0 0 24 24"><path d="M4 3l5-1v17H3z" fill="#2f7ae8" stroke="#1b4ba8"/><path d="M11 3h12l-3 3h-7M11 10h8l-2 3h-6M4 22h6" stroke="#2f6ae0" stroke-width="1.500" fill="none"/><path d="M11 6l8 15" stroke="#111" stroke-width="2.800"/><path d="M10 0v8M6 4h8" stroke="#fff"/></symbol>
<symbol id="r10" viewBox="0 0 24 24"><path d="M20 2L10 8l-2 5-3 4 4 4 5-3-1-6 4-3 4 1z" fill="#9a9ab0" stroke="#555"/><path d="M9 1h11l3 3-4 1-4-1-6 0z" fill="#777" stroke="#444"/><ellipse cx="6" cy="20" rx="4" ry="2.500" fill="#f48a20"/></symbol>
<symbol id="mv" viewBox="0 0 20 20"><path d="M10 1l8 4v9l-8 5-8-5V5z" fill="none" stroke="#18a058" stroke-width="1.400"/><path d="M2 5l8 5 8-5M10 10v9M6 3l8 5M6 15v-9" fill="none" stroke="#18a058"/><path d="M8 19l10-4" stroke="#e33" stroke-width="1.600"/></symbol>
<symbol id="cam" viewBox="0 0 20 20"><path d="M1 4l16-3 2 13-16 5z" fill="#fff" stroke="#d22" stroke-width="1.300"/><circle cx="11" cy="9" r="4" fill="#8a9ee8" stroke="#223a98"/><rect x="15" y="7" width="3" height="5" fill="#222"/></symbol>
<symbol id="foldc" viewBox="0 0 20 20"><path d="M1 7h7l2-3h8l-1 3" fill="#fff6c8" stroke="#8b6508"/><path d="M1 18V7h16v11z" fill="#f9c53c" stroke="#8b6508"/><path d="M1 18l4-7h15l-4 7z" fill="#ffdb66" stroke="#8b6508"/><path d="M12 1h6M12 3.500h6" stroke="#2539a8"/></symbol>
<symbol id="foldo" viewBox="0 0 20 20"><path d="M1 7h7l2-3h7v4" fill="#fff6c8" stroke="#8b6508"/><path d="M1 18V7h16v11z" fill="#f9c53c" stroke="#8b6508"/><path d="M1 18l4-7h15l-4 7z" fill="#ffdb66" stroke="#8b6508"/></symbol>
<symbol id="tick" viewBox="0 0 20 20"><path d="M1 10l3-2 4 4L16 2l3 2L9 18H7z" fill="#12b32a"/></symbol>
<symbol id="csys" viewBox="0 0 20 20"><path d="M4 8l7-3 7 6-7 3-7-3z" fill="#eee" stroke="#444"/><path d="M4 8v7l6 3v-6M3 1v8" fill="none" stroke="#333"/><path d="M3 1v6" stroke="#1b3fd0"/><path d="M11 14l8 4" stroke="#d11"/><path d="M11 10l8-4" stroke="#0a0"/></symbol>
<symbol id="rev" viewBox="0 0 20 20"><path d="M2 3l5-1v15l-4-2z" fill="#2b5ce0"/><path d="M7 2h11v5l-3 1v10l-4 1-1-11H7z" fill="#f59b20" stroke="#b33" stroke-width=".5"/><path d="M8 2h3v16h-1z" fill="#e33"/></symbol>
<symbol id="shl2" viewBox="0 0 20 20"><path d="M1 7l12-6 6 3v15l-7-2-11-4z" fill="#5a88e0" stroke="#254da8"/><path d="M4 9l8-3v10l-8-3z" fill="#f59b20" stroke="#b33" stroke-width=".5"/></symbol>
<symbol id="ext2" viewBox="0 0 20 20"><path d="M1 3h18v14H1z" fill="#f9a825" stroke="#b76d00"/><path d="M6 3v14M13 3v14" stroke="#b76d00"/><path d="M1 17h18v2H1z" fill="#5a88e0"/><path d="M7 4h5v13H7z" fill="#ffd7a0"/></symbol>
<symbol id="lens" viewBox="0 0 24 24"><circle cx="14" cy="9" r="7" fill="#fff" stroke="#555" stroke-width="1.800"/><path d="M9 14l-7 7" stroke="#555" stroke-width="3"/></symbol>
<symbol id="expand" viewBox="0 0 24 24"><path d="M2 7V2h5M17 2h5v5M2 17v5h5M22 17v5h-5" fill="none" stroke="#333" stroke-width="1.500"/><rect x="6" y="5" width="12" height="14" fill="#eef3fa" stroke="#333"/><rect x="8" y="9" width="8" height="6" fill="#2a5ad0"/></symbol>
<symbol id="ime-zh" viewBox="0 0 24 24"><path d="M12 1v22M4 6h16v10H4z" fill="none" stroke="#1e78d0" stroke-width="3"/></symbol>
<symbol id="ime-dot" viewBox="0 0 24 24"><circle cx="6" cy="6" r="2.500" fill="#1e78d0"/><path d="M14 4c2 0 2 3 0 3M14 15c3 0 3 4-1 7" fill="none" stroke="#1e78d0" stroke-width="2.500"/></symbol>
<symbol id="ime-f" viewBox="0 0 24 24"><circle cx="12" cy="12" r="10.500" fill="#1e78d0"/><path d="M7 5v6c0 7 10 7 10 0V5" fill="#fff"/><rect x="10" y="4" width="4" height="9" fill="#1e78d0"/></symbol>
<symbol id="ime-mic" viewBox="0 0 24 24"><rect x="8" y="1" width="8" height="14" rx="4" fill="#1e78d0"/><path d="M4 11c0 11 16 11 16 0M12 18v5M7 23h10" fill="none" stroke="#1e78d0" stroke-width="2.200"/></symbol>
<symbol id="ime-om" viewBox="0 0 24 24"><path d="M3 21h6v-3c-8-6-4-16 3-16s11 10 3 16v3h6" fill="none" stroke="#1e78d0" stroke-width="2.800"/></symbol>
<symbol id="ime-kb" viewBox="0 0 24 24"><rect x="2" y="4" width="20" height="15" rx="2" fill="#1e78d0"/><path d="M5 8h3M10 8h3M15 8h3M5 12h3M10 12h3M15 12h3M7 16h10" stroke="#fff" stroke-width="1.500"/></symbol>
<symbol id="ime-sh" viewBox="0 0 24 24"><path d="M1 20L12 6l11 1v14H1z" fill="#c5c8cc"/></symbol>
<symbol id="ime-gr" viewBox="0 0 24 24"><circle cx="6" cy="6" r="4" fill="#1e78d0"/><circle cx="18" cy="6" r="4" fill="#1e78d0"/><rect x="2" y="13" width="9" height="9" rx="3" fill="#1e78d0"/><rect x="13" y="13" width="9" height="9" rx="3" fill="#1e78d0"/></symbol>
</svg>

<div class="app">
  <div class="strip"></div>
  <div class="win">
    <header class="titlebar">
      <span class="nxlogo">NX</span>
      <i class="qs"></i>
      <span class="qb w32"><svg class="s18"><use href="#save"/></svg></span>
      <i class="qs"></i>
      <span class="qb w28"><svg class="s18"><use href="#undo"/></svg></span>
      <i class="qs"></i>
      <span class="qb w24"><svg class="s18"><use href="#cut"/></svg></span>
      <span class="qb w24"><svg class="s18"><use href="#copy"/></svg></span>
      <span class="qb w24"><svg class="s18"><use href="#paste"/></svg></span>
      <i class="qs ml2"></i>
      <span class="qb w26"><svg class="s20"><use href="#touch"/></svg></span>
      <span class="qb w12"><i class="car"></i></span>
      <i class="qs ml5"></i>
      <span class="qb w26"><svg class="s20"><use href="#eraser"/></svg></span>
      <i class="qs ml2"></i>
      <span class="qb w26"><svg class="s18"><use href="#switch"/></svg></span>
      <span class="qt">切换窗口</span>
      <span class="qb w24 ml3"><svg class="s18"><use href="#winic"/></svg></span>
      <span class="qt">窗口</span>
      <span class="qb w12 ml2"><i class="car"></i></span>
      <span class="qb w12 ml2"><i class="car barcar"></i></span>
      <span class="wintitle">NX 12 - 建模</span>
      <span class="siemens">SIEMENS</span>
      <span class="wc wmin"></span>
      <span class="wc wmax"></span>
      <span class="wc wclose"></span>
    </header>

    <nav class="tabbar">
      <span class="filetab">文件(F)</span>
      <span class="tab on">主页</span>
      <span class="tab">装配</span>
      <span class="tab">曲线</span>
      <span class="tab">分析</span>
      <span class="tab">视图</span>
      <span class="tab">渲染</span>
      <span class="tab">工具</span>
      <span class="tab">应用模块</span>
      <div class="searchbox"><span>查找命令</span><svg class="s18"><use href="#lens"/></svg></div>
      <svg class="s20 tbi"><use href="#expand"/></svg>
      <span class="upic"></span>
      <span class="help">?</span>
    </nav>

    <section class="ribbon">
      <div class="grp g1">
        <div class="body">
          <div class="big w57"><div class="bi"><svg class="s30"><use href="#sketch"/></svg></div><span class="lb">草图</span></div>
          <div class="skbox">
            <svg class="sk"><use href="#spline"/></svg><svg class="sk"><use href="#srect"/></svg><svg class="sk"><use href="#sline"/></svg>
            <svg class="sk"><use href="#sarc"/></svg><svg class="sk"><use href="#scirc"/></svg><svg class="sk"><use href="#splus"/></svg>
          </div>
          <div class="skarrows"><i class="car up"></i><i class="car"></i><i class="car barcar"></i></div>
        </div>
        <div class="foot"><span>直接草图</span><i class="car"></i></div>
      </div>

      <div class="grp g2">
        <div class="body pl13">
          <div class="big w56"><div class="bi"><svg class="s34"><use href="#plane"/></svg></div><span class="lb">基准平面</span><i class="car"></i></div>
          <div class="big w28 ml10"><div class="bi"><svg class="s34"><use href="#extr"/></svg></div><span class="lb">拉伸</span><i class="car"></i></div>
          <div class="big w26 ml13"><div class="bi"><svg class="s30"><use href="#hole"/></svg></div><span class="lb">孔</span></div>
          <div class="stack ml14">
            <div class="si"><svg class="s16"><use href="#pat"/></svg><span>阵列特征</span></div>
            <div class="si"><svg class="s16"><use href="#unite"/></svg><span>合并</span><i class="car ml6"></i></div>
            <div class="si"><svg class="s16"><use href="#shell"/></svg><span>抽壳</span></div>
          </div>
          <div class="big w42 ml9"><div class="bi"><svg class="s34"><use href="#blend"/></svg></div><span class="lb">边倒圆</span><i class="car"></i></div>
          <div class="stack ml9">
            <div class="si"><svg class="s16"><use href="#cham"/></svg><span>倒斜角</span></div>
            <div class="si"><svg class="s16"><use href="#trim"/></svg><span>修剪体</span></div>
            <div class="si"><svg class="s16"><use href="#draft"/></svg><span>拔模</span></div>
          </div>
          <div class="big w38 ml12"><div class="morebox"><svg class="s20"><use href="#more1"/></svg></div><span class="lb">更多</span><i class="car"></i></div>
        </div>
        <div class="foot"><span>特征</span><i class="car"></i></div>
      </div>

      <div class="grp g3">
        <div class="body pl13">
          <div class="big w42"><div class="bi"><svg class="s34"><use href="#move"/></svg></div><span class="lb">移动面</span></div>
          <div class="stack ml9">
            <div class="si"><svg class="s16"><use href="#hoff"/></svg><span>偏置区域</span></div>
            <div class="si"><svg class="s16"><use href="#hrep"/></svg><span>替换面</span></div>
            <div class="si"><svg class="s16"><use href="#hdel"/></svg><span>删除面</span></div>
          </div>
          <div class="big w38 ml11"><div class="morebox"><svg class="s20"><use href="#more2"/></svg></div><span class="lb">更多</span><i class="car"></i></div>
        </div>
        <div class="foot"><span>同步建模</span><i class="car"></i></div>
      </div>

      <div class="grp g4">
        <div class="icons pl3">
          <div class="irow"><i class="ic"><svg class="s20"><use href="#a1"/></svg></i><i class="ic"><svg class="s20"><use href="#a2"/></svg></i><i class="ic"><svg class="s20"><use href="#a3"/></svg></i><i class="vs"></i><i class="ic"><svg class="s20"><use href="#a4"/></svg></i></div>
          <div class="irow"><i class="ic"><svg class="s20"><use href="#b1"/></svg></i><i class="ic"><svg class="s20"><use href="#b2"/></svg></i><i class="ic"><svg class="s20"><use href="#b3"/></svg></i><i class="vs"></i><i class="ic"><svg class="s20"><use href="#b4"/></svg></i></div>
        </div>
        <div class="foot"><span>标准化工具...</span><i class="car"></i></div>
      </div>

      <div class="grp g5">
        <div class="icons pl4">
          <div class="irow"><i class="ic"><svg class="s20"><use href="#c1"/></svg></i><i class="ic"><svg class="s20"><use href="#c2"/></svg></i></div>
          <div class="irow"><i class="ic"><svg class="s20"><use href="#c3"/></svg></i></div>
        </div>
        <div class="foot"><span>齿...</span><i class="car"></i></div>
      </div>

      <div class="grp g6">
        <div class="icons pl4">
          <div class="irow"><i class="ic"><svg class="s20"><use href="#d1"/></svg></i><i class="ic"><svg class="s20"><use href="#d2"/></svg></i></div>
          <div class="irow"><i class="ic"><svg class="s20"><use href="#d3"/></svg></i><i class="vs"></i><i class="ic"><svg class="s20"><use href="#d4"/></svg></i></div>
        </div>
        <div class="foot"><span>弹...</span><i class="car"></i></div>
      </div>

      <div class="grp g7">
        <div class="icons pl4">
          <div class="irow"><i class="ic"><svg class="s20"><use href="#e1"/></svg></i><i class="ic"><svg class="s20"><use href="#e2"/></svg></i></div>
          <div class="irow"><i class="ic"><svg class="s20"><use href="#e3"/></svg></i><i class="ic"><svg class="s20"><use href="#e4"/></svg></i></div>
        </div>
        <div class="foot"><span>加...</span><i class="car"></i></div>
      </div>

      <div class="grp g8">
        <div class="icons pl4">
          <div class="irow"><i class="ic"><svg class="s20"><use href="#f1"/></svg></i><i class="ic"><svg class="s20"><use href="#f2"/></svg></i><i class="ic"><svg class="s20"><use href="#f3"/></svg></i><i class="ic"><svg class="s20"><use href="#f4"/></svg></i></div>
          <div class="irow"><i class="ic"><svg class="s20"><use href="#f5"/></svg></i><i class="ic"><svg class="s20"><use href="#f6"/></svg></i><i class="vs"></i><i class="ic fit"><span class="bino"><svg class="bn"><use href="#binoc"/></svg><b>10<em>H7</em></b></span></i></div>
        </div>
        <div class="foot"><span>建模工具 ...</span><i class="car"></i></div>
      </div>

      <div class="grp g9">
        <div class="icons pl4">
          <div class="irow"><i class="ic"><svg class="s20"><use href="#cubes"/></svg></i></div>
          <div class="irow"><i class="ic"><svg class="s20"><use href="#cubes"/></svg></i></div>
        </div>
        <div class="foot"><span>!.</span><i class="car"></i></div>
      </div>

      <div class="grp g10">
        <div class="icons pl6">
          <div class="irow">
            <i class="ic"><svg class="s20"><use href="#g1"/></svg></i><i class="vs"></i>
            <i class="ic xt">X</i>
            <i class="ic"><span class="tol"><b>1.00</b><em>±.05</em></span></i>
            <i class="ic"><span class="tol"><b>1.00</b><em>+.05<br>-.02</em></span></i>
            <i class="ic"><span class="tol"><b>1.00</b><em>+.05<br><u>-.00</u></em></span></i>
            <i class="ic"><span class="tol"><b>1.00</b><em><u>+.00</u><br>-.02</em></span></i>
            <i class="ic"><span class="xbox">X</span></i>
            <i class="ic"><span class="xparen"><em>(</em>X<em>)</em></span></i>
            <i class="ic"><span class="blu">10H7</span></i>
            <i class="ic"><span class="blu2">10H7<small>[8<sup>.01</sup>]</small></span></i>
            <i class="ic"><span class="blu2">10H7<small>[8<sup>.015</sup>]</small></span></i>
            <i class="ic"><span class="blu2">10<small>[8<sup>.015</sup>]</small></span></i>
          </div>
          <div class="irow">
            <i class="ic"><svg class="s20"><use href="#g2"/></svg></i><i class="ic"><svg class="s20"><use href="#g3"/></svg></i><i class="vs"></i>
            <i class="ic"><svg class="s20"><use href="#g4"/></svg></i><i class="ic"><svg class="s20"><use href="#g5"/></svg></i><i class="ic"><svg class="s16"><use href="#g6"/></svg></i>
          </div>
        </div>
        <div class="foot"><span>尺寸快速格式化工具 - GC工具箱</span><i class="car"></i></div>
      </div>

      <div class="grp g11">
        <div class="body center">
          <div class="big w28"><div class="bi"><svg class="s32"><use href="#surf"/></svg></div><span class="lb">曲面</span><i class="car"></i></div>
        </div>
      </div>

      <div class="grp g12">
        <div class="body pl13">
          <div class="big w56"><div class="bi"><svg class="s30"><use href="#asmg"/></svg></div><span class="lb dim">处理装配</span></div>
          <div class="big w28 ml11"><div class="bi"><svg class="s32"><use href="#addc"/></svg></div><span class="lb">添加</span><i class="car"></i></div>
          <div class="stack ml12">
            <div class="si"><svg class="s16"><use href="#constr"/></svg><span>装配约束</span></div>
            <div class="si"><svg class="s16"><use href="#mvc"/></svg><span>移动组件</span></div>
            <div class="si"><svg class="s16"><use href="#arrc"/></svg><span>阵列组件</span></div>
          </div>
        </div>
        <div class="foot"><span>装配</span><i class="car"></i></div>
      </div>

      <div class="grp gend"><div class="foot"><i class="car"></i></div></div>
    </section>

    <section class="toolbar">
      <svg class="s18 menuic"><use href="#menuic"/></svg>
      <span class="menut">菜单(<u>M</u>)</span><i class="car ml5"></i>
      <i class="tsep sep1"></i>
      <div class="combo c-a"><span>无选择过滤器</span><i class="car big-car"></i></div>
      <div class="combo c-b"><span>整个装配</span><i class="car big-car"></i></div>
      <div class="tools">
        <span class="tb"><svg class="s18"><use href="#t1"/></svg></span>
        <span class="tb"><svg class="s18"><use href="#t2"/></svg></span>
        <span class="tb"><svg class="s18"><use href="#t3"/></svg></span><span class="tc"><i class="car"></i></span>
        <span class="tb"><svg class="s18"><use href="#t4"/></svg></span>
        <span class="tb"><svg class="s18"><use href="#t5"/></svg></span>
        <span class="tb"><svg class="s18"><use href="#t6"/></svg></span>
        <span class="tb"><svg class="s18"><use href="#t7"/></svg></span><span class="tc"><i class="car"></i></span>
        <span class="tb"><svg class="s18"><use href="#t8"/></svg></span>
        <span class="tb"><svg class="s18"><use href="#t9"/></svg></span>
        <span class="tb"><svg class="s18"><use href="#t10"/></svg></span>
        <span class="tb"><svg class="s18"><use href="#t11"/></svg></span>
        <span class="tb"><svg class="s18"><use href="#t12"/></svg></span>
        <span class="tb"><svg class="s18"><use href="#t13"/></svg></span>
        <span class="tb"><svg class="s18"><use href="#t14"/></svg></span>
        <span class="tb"><svg class="s18"><use href="#t15"/></svg></span>
        <span class="tb"><svg class="s18"><use href="#t16"/></svg></span>
        <span class="tb"><svg class="s18"><use href="#t17"/></svg></span>
        <span class="tb"><svg class="s18"><use href="#t18"/></svg></span>
        <span class="tb"><svg class="s18"><use href="#t19"/></svg></span>
        <span class="tb"><svg class="s18"><use href="#t20"/></svg></span>
        <span class="tb"><svg class="s18"><use href="#t21"/></svg></span>
        <span class="tb"><svg class="s18"><use href="#t22"/></svg></span>
        <span class="tb"><svg class="s18"><use href="#t23"/></svg></span>
        <i class="tsep sep2"></i>
        <span class="tb"><svg class="s18"><use href="#v1"/></svg></span>
        <span class="tb"><svg class="s18"><use href="#v2"/></svg></span>
        <span class="tb act"><svg class="s18"><use href="#v3"/></svg></span>
        <span class="tb"><svg class="s18"><use href="#v4"/></svg></span>
        <span class="tb"><svg class="s18"><use href="#v5"/></svg></span>
        <span class="tb"><svg class="s18"><use href="#v6"/></svg></span><span class="tc"><i class="car"></i></span>
        <span class="tb"><svg class="s18"><use href="#v7"/></svg></span><span class="tc"><i class="car"></i></span>
        <span class="tb"><svg class="s18"><use href="#v8"/></svg></span><span class="tc"><i class="car"></i></span>
        <span class="tb"><svg class="s18"><use href="#v9"/></svg></span><span class="tc"><i class="car"></i></span>
        <i class="tsep sep3"></i>
      </div>
      <i class="car endcar"></i>
    </section>

    <main class="main">
      <aside class="rail">
        <span class="ri r-gear"><svg class="s18"><use href="#gear"/></svg></span>
        <span class="ri r-a"><svg class="s24"><use href="#r1"/></svg></span>
        <span class="ri r-b"><svg class="s24"><use href="#r2"/></svg></span>
        <span class="ri r-c"><svg class="s24"><use href="#r3"/></svg></span>
        <span class="ri r-d"><svg class="s24"><use href="#r4"/></svg></span>
        <span class="ri r-e"><svg class="s24"><use href="#r5"/></svg></span>
        <span class="ri r-f"><svg class="s24"><use href="#r6"/></svg></span>
        <span class="ri r-g"><svg class="s24"><use href="#r7"/></svg></span>
        <span class="ri r-h"><svg class="s24"><use href="#r8"/></svg></span>
        <span class="ri r-i"><svg class="s24"><use href="#r9"/></svg></span>
        <span class="ri r-j"><svg class="s24"><use href="#r10"/></svg></span>
      </aside>

      <section class="panel">
        <div class="phead"><span>部件导航器</span><i class="pmax"></i></div>
        <div class="tbl">
          <div class="thead"><div class="th c1">名称<i class="sort"></i></div><div class="th c2">最新</div><div class="th c3">附注</div></div>
          <div class="rows">
            <div class="tr"><div class="td c1"><i class="exp plus"></i><svg class="s16 ml4"><use href="#mv"/></svg><span class="nm ml3">模型视图</span></div><div class="td c2"></div><div class="td c3"></div></div>
            <div class="tr vl1"><div class="td c1"><i class="exp plus"></i><svg class="s12 ml6"><use href="#tick"/></svg><svg class="s16 ml2"><use href="#cam"/></svg><span class="nm ml3">摄像机</span></div><div class="td c2"></div><div class="td c3"></div></div>
            <div class="tr vl1"><div class="td c1"><i class="exp plus"></i><svg class="s16 ml4"><use href="#foldc"/></svg><span class="nm ml3">用户表达式</span></div><div class="td c2"></div><div class="td c3"></div></div>
            <div class="tr vl1 vlh"><div class="td c1"><i class="exp"></i><svg class="s16 ml4"><use href="#foldo"/></svg><span class="nm ml3">模型历史记录</span></div><div class="td c2"></div><div class="td c3"></div></div>
            <div class="tr ch vl2"><div class="td c1"><i class="cb"><svg class="s12"><use href="#tick"/></svg></i><svg class="s15 ml3"><use href="#csys"/></svg><span class="nm ml3">基准坐标系 (0)</span></div><div class="td c2"><svg class="s13"><use href="#tick"/></svg></div><div class="td c3"></div></div>
            <div class="tr ch vl2"><div class="td c1"><i class="cb"><svg class="s12"><use href="#tick"/></svg></i><svg class="s15 ml3"><use href="#rev"/></svg><span class="nm ml3">旋转 (1)</span></div><div class="td c2"><svg class="s13"><use href="#tick"/></svg></div><div class="td c3"></div></div>
            <div class="tr ch vl2"><div class="td c1"><i class="cb"><svg class="s12"><use href="#tick"/></svg></i><svg class="s15 ml3"><use href="#shl2"/></svg><span class="nm ml3">壳 (2)</span></div><div class="td c2"><svg class="s13"><use href="#tick"/></svg></div><div class="td c3"></div></div>
            <div class="tr ch vl2 last"><div class="td c1"><i class="cb"><svg class="s12"><use href="#tick"/></svg></i><svg class="s15 ml3"><use href="#ext2"/></svg><span class="nm ml3 bold">拉伸 (3)</span></div><div class="td c2"><svg class="s13"><use href="#tick"/></svg></div><div class="td c3"></div></div>
            <div class="tr"><div class="td c1"></div><div class="td c2"></div><div class="td c3"></div></div>
            <div class="tr"><div class="td c1"></div><div class="td c2"></div><div class="td c3"></div></div>
            <div class="tr"><div class="td c1"></div><div class="td c2"></div><div class="td c3"></div></div>
            <div class="tr"><div class="td c1"></div><div class="td c2"></div><div class="td c3"></div></div>
            <div class="tr"><div class="td c1"></div><div class="td c2"></div><div class="td c3"></div></div>
            <div class="tr"><div class="td c1"></div><div class="td c2"></div><div class="td c3"></div></div>
            <div class="tr"><div class="td c1"></div><div class="td c2"></div><div class="td c3"></div></div>
            <div class="tr"><div class="td c1"></div><div class="td c2"></div><div class="td c3"></div></div>
            <div class="tr"><div class="td c1"></div><div class="td c2"></div><div class="td c3"></div></div>
            <div class="tr"><div class="td c1"></div><div class="td c2"></div><div class="td c3"></div></div>
            <div class="tr"><div class="td c1"></div><div class="td c2"></div><div class="td c3"></div></div>
            <div class="tr"><div class="td c1"></div><div class="td c2"></div><div class="td c3"></div></div>
            <div class="tr"><div class="td c1"></div><div class="td c2"></div><div class="td c3"></div></div>
            <div class="tr"><div class="td c1"></div><div class="td c2"></div><div class="td c3"></div></div>
            <div class="tr"><div class="td c1"></div><div class="td c2"></div><div class="td c3"></div></div>
            <div class="tr"><div class="td c1"></div><div class="td c2"></div><div class="td c3"></div></div>
            <div class="tr"><div class="td c1"></div><div class="td c2"></div><div class="td c3"></div></div>
            <div class="tr"><div class="td c1"></div><div class="td c2"></div><div class="td c3"></div></div>
            <div class="tr"><div class="td c1"></div><div class="td c2"></div><div class="td c3"></div></div>
            <div class="tr"><div class="td c1"></div><div class="td c2"></div><div class="td c3"></div></div>
            <div class="tr"><div class="td c1"></div><div class="td c2"></div><div class="td c3"></div></div>
          </div>
          <div class="hscroll"><i class="chev left"></i><div class="thumb"></div><i class="chev right"></i></div>
        </div>
        <div class="pbar"></div>
        <div class="sect"><span>相关性</span><i class="vchev"></i></div>
        <div class="sect"><span>细节</span><i class="vchev"></i></div>
        <div class="sect"><span>预览</span><i class="vchev"></i></div>
      </section>

      <section class="work">
        <div class="doctabs">
          <div class="doc"><svg class="s16"><use href="#docic"/></svg><span>添加螺纹.prt</span><svg class="s12 dm"><use href="#docm"/></svg></div>
          <div class="doc on"><svg class="s16"><use href="#docic"/></svg><span>旋转抽壳.prt</span><svg class="s12 dm"><use href="#docm"/></svg><b class="dx">✕</b></div>
        </div>
        <div class="docstrip"></div>
        <div class="vp">
          <svg class="scene" viewBox="425 231 1414 826">
            <defs>
              <clipPath id="domeClip"><path d="M884,783C905,735 945,662 1064,662C1075,662 1088,663 1098.500,665L1404,721C1450,728 1484,768 1491,817C1488,832 1450,842 1418,848L1123,896C1100,903 1050,906 987,906C950,906 915,900 896,892Z"/></clipPath>
              <linearGradient id="dome" gradientUnits="userSpaceOnUse" x1="1250" y1="680" x2="1252" y2="880">
                <stop offset="0" stop-color="#ffb400"/><stop offset=".2" stop-color="#ffcc00"/><stop offset=".38" stop-color="#ffe61a"/><stop offset=".5" stop-color="#fffb30"/><stop offset=".6" stop-color="#ffe81c"/><stop offset=".72" stop-color="#ffc800"/><stop offset=".88" stop-color="#ffa000"/><stop offset="1" stop-color="#f59200"/>
              </linearGradient>
              <linearGradient id="side" gradientUnits="userSpaceOnUse" x1="855" y1="0" x2="1536" y2="0">
                <stop offset="0" stop-color="#b87200"/><stop offset=".12" stop-color="#bd7500"/><stop offset=".4" stop-color="#e08800"/><stop offset=".8" stop-color="#e88c00"/><stop offset="1" stop-color="#f49800"/>
              </linearGradient>
              <filter id="b8" x="-50%" y="-50%" width="200%" height="200%"><feGaussianBlur stdDeviation="8"/></filter>
              <filter id="b18" x="-50%" y="-50%" width="200%" height="200%"><feGaussianBlur stdDeviation="18"/></filter>
              <filter id="b12" x="-50%" y="-50%" width="200%" height="200%"><feGaussianBlur stdDeviation="12"/></filter>
            </defs>
            <path class="plside" d="M853,899L857,929C890,942 940,948 987,947C1050,947 1100,945 1139,936L1434,889C1470,880 1510,866 1536,848L1534,812C1533,825 1510,838 1490,843L1431,858L1137,906C1090,915 1040,917 987,917C930,917 880,910 853,899Z"/>
            <path class="pltop" d="M845,850L885,831L1486,791C1510,797 1532,805 1534,812C1533,825 1510,838 1490,843L1431,858L1137,906C1090,915 1040,917 987,917C930,917 880,910 853,899Z"/>
            <path class="edge" d="M885,831L845,850L853,899L857,929M1137,906L1139,936M1431,858L1434,889M1486,791C1510,797 1532,805 1534,812L1536,848"/>
            <g clip-path="url(#domeClip)">
              <rect x="880" y="655" width="620" height="260" fill="url(#dome)"/>
              <path d="M1090,650L1116,905H870V650Z" fill="#ffc200" opacity=".62" filter="url(#b12)"/>
              <ellipse cx="1022" cy="785" rx="58" ry="34" fill="#ffdc34" opacity=".8" filter="url(#b12)"/>
              <ellipse cx="925" cy="790" rx="32" ry="105" fill="#ff9a00" filter="url(#b18)"/>
              <ellipse cx="985" cy="872" rx="115" ry="26" fill="#ff9800" filter="url(#b12)"/>
              <ellipse cx="930" cy="900" rx="55" ry="20" fill="#a06800" opacity=".6" filter="url(#b18)"/>
              <ellipse cx="1475" cy="785" rx="26" ry="60" fill="#ffb000" filter="url(#b12)"/>
              <ellipse cx="1435" cy="725" rx="36" ry="14" fill="#ffb400" filter="url(#b8)"/>
              <path d="M884,783C905,735 945,662 1064,662C1075,662 1088,663 1098.500,665" fill="none" stroke="#ffa800" stroke-width="10" filter="url(#b8)"/>
              <path d="M1098.500,665L1404,721" fill="none" stroke="#ffae00" stroke-width="8" filter="url(#b8)"/>
              <path d="M884,783L896,892L882,892Z" fill="#c47c00"/>
            </g>
            <path class="edge" d="M884,783L896,892C915,900 950,906 987,906C1050,906 1100,903 1123,896L1418,848C1450,842 1488,832 1491,817"/>
            <path class="edge" d="M1098.500,665L1123,896M1404,721L1418,848"/>
            <path class="hud" d="M1250,838L1385,827L1392,892L1322,897L1318,833M1320,849L1386,843"/>
            <path d="M1251,838l16-4v6z" fill="#ddd" stroke="#bbb" stroke-width=".5"/>
            <text class="t-z" x="1240" y="845">Z</text>
            <path d="M1392,896L1393,945" stroke="#1a2ee0" stroke-width="1"/>
            <path d="M1389,853l-4,5l4,6l3,-6z" fill="#1a2ee0"/>
            <path d="M1391,940l6,0l-3,14z" fill="#1a2ee0"/>
            <text class="t-x" x="1390" y="967">X</text>

            <path d="M466,995L490,992L494,1020L469,1023Z" fill="#d4d4d4" stroke="#bbb"/>
            <path d="M467,1005L491,1002M468,1016L493,1013" stroke="#bbb" fill="none"/>
            <path d="M448,992L488,988" stroke="#1640e0" stroke-width="2.500"/>
            <path d="M446,992l14,-3v5z" fill="#1640e0"/>
            <text class="t-tz" x="438" y="998">Z</text>
            <path d="M493,990V1004" stroke="#178a30" stroke-width="1.500"/>
            <path d="M493,995l-3,6 3,6 3,-6z" fill="#178a30"/>
            <circle cx="492" cy="988" r="3" fill="#f4f4f4"/>
            <path d="M493,1012V1024" stroke="#c9a0a0" stroke-width="1.500"/>
            <path d="M490,1021h6l-3,11z" fill="#b83030"/>
            <text class="t-tx" x="491" y="1043">X</text>
          </svg>
        </div>
      </section>
    </main>

    <footer class="status">拖动光标以绕 X-Y 旋转视图</footer>
  </div>

  <div class="ime">
    <svg class="s18"><use href="#ime-zh"/></svg>
    <svg class="s18"><use href="#ime-dot"/></svg>
    <svg class="s18"><use href="#ime-f"/></svg>
    <svg class="s18"><use href="#ime-mic"/></svg>
    <svg class="s18"><use href="#ime-om"/></svg>
    <svg class="s18"><use href="#ime-kb"/></svg>
    <svg class="s18"><use href="#ime-sh"/></svg>
    <svg class="s18"><use href="#ime-gr"/></svg>
  </div>
  <div class="sogou"><span>S</span></div>
  <div class="wm">https://blog.csdn.net/weixin_43942099</div>
</div>
</body>
</html>
```
FILE: styles.css
```css
* { box-sizing: border-box; }
html, body { margin: 0; padding: 0; }
body { width: 1839px; height: 1080px; overflow: hidden; background: #222; color: #222; font: 14px/20px "Noto Sans CJK SC", "Noto Sans", sans-serif; }
i, em { font-style: normal; }
svg { display: block; flex: none; }
.defs { position: absolute; width: 0; height: 0; }

.s12 { width: 12px; height: 12px; } .s13 { width: 13px; height: 13px; } .s15 { width: 15px; height: 15px; } .s16 { width: 16px; height: 16px; }
.s18 { width: 18px; height: 18px; } .s20 { width: 20px; height: 20px; } .s24 { width: 24px; height: 24px; }
.s30 { width: 30px; height: 32px; } .s32 { width: 32px; height: 34px; } .s34 { width: 34px; height: 36px; }
.w12 { width: 12px; } .w24 { width: 24px; } .w26 { width: 26px; } .w28 { width: 28px; } .w32 { width: 32px; }
.w38 { width: 38px; } .w42 { width: 42px; } .w56 { width: 56px; } .w57 { width: 57px; }
.ml2 { margin-left: 2px; } .ml3 { margin-left: 3px; } .ml4 { margin-left: 4px; } .ml5 { margin-left: 5px; } .ml6 { margin-left: 6px; } .ml7 { margin-left: 7px; }
.ml9 { margin-left: 9px; } .ml10 { margin-left: 10px; } .ml11 { margin-left: 11px; } .ml12 { margin-left: 12px; } .ml13 { margin-left: 13px; } .ml14 { margin-left: 14px; }
.pl3 { padding-left: 3px; } .pl4 { padding-left: 4px; } .pl6 { padding-left: 6px; } .pl13 { padding-left: 13px; }

.car { display: block; width: 0; height: 0; flex: none; border-left: 4.5px solid transparent; border-right: 4.5px solid transparent; border-top: 5px solid #222; }
.car.up { border-top: 0; border-bottom: 6px solid #b5b5b5; }
.barcar { position: relative; margin-top: 3px; }
.barcar::before { content: ""; position: absolute; left: -4.5px; top: -8px; width: 9px; height: 1.500px; background: #222; }

.app { position: relative; display: flex; width: 1839px; height: 1080px; }
.strip { width: 9px; flex: none; background: linear-gradient(#222a3a 0, #23323a 60px, #2a4238 200px, #2c3c38 378px, #5b6268 382px, #5b6268 438px, #232a38 442px, #1f2a35 800px, #1b2a22 980px, #141414 1080px); }
.win { flex: 1; min-width: 0; display: flex; flex-direction: column; background: #f0f0f0; }

.titlebar { height: 30px; flex: none; display: flex; align-items: center; background: #f0f0f0; }
.nxlogo { width: 46px; padding-left: 4px; font: 700 26px/30px "Liberation Sans", sans-serif; color: #8f9eab; letter-spacing: -.5px; }
.qs { width: 1px; height: 24px; background: #bdbdbd; flex: none; }
.qb { display: flex; align-items: center; justify-content: center; flex: none; }
.qt { font-size: 14px; line-height: 20px; white-space: nowrap; }
.wintitle { margin-left: 572.500px; font-size: 15px; line-height: 20px; white-space: nowrap; }
.siemens { margin-left: auto; margin-right: -2px; font: 700 15px/20px "Liberation Sans", sans-serif; color: #00949a; letter-spacing: .6px; }
.wc { width: 30px; height: 30px; position: relative; flex: none; }
.wmin { margin-left: 19px; }
.wmin::after { content: ""; position: absolute; left: 11px; top: 20px; width: 8px; height: 2px; background: #444; }
.wmax::before { content: ""; position: absolute; left: 13px; top: 10px; width: 8px; height: 8px; border: 1.500px solid #444; }
.wmax::after { content: ""; position: absolute; left: 10px; top: 13px; width: 8px; height: 8px; border: 1.500px solid #444; background: #f0f0f0; }
.wclose { margin-right: 2px; }
.wclose::before, .wclose::after { content: ""; position: absolute; left: 7px; top: 14px; width: 15px; height: 2px; background: #444; }
.wclose::before { transform: rotate(45deg); }
.wclose::after { transform: rotate(-45deg); }

.tabbar { height: 32px; flex: none; display: flex; align-items: stretch; background: #bbb; }
.filetab { width: 91px; background: #55a0bb; color: #fff; font-size: 16px; line-height: 29px; text-align: center; }
.tab { padding: 0 13px; font-size: 16px; line-height: 30px; color: #222; }
.tab.on { margin-left: 1px; width: 59px; padding: 0; text-align: center; margin-top: 2px; line-height: 28px; background: #f0f0f0; color: #0e7fa0; border-top: 1px solid #ddd; }
.searchbox { margin: 4px 0 5px auto; width: 156px; background: #fff; border: 1px solid #ccc; display: flex; align-items: center; justify-content: space-between; padding: 0 2px; font-size: 14px; color: #aaa; }
.tbi { align-self: center; margin-left: 10px; }
.upic { width: 11px; height: 11px; margin: 12px 0 0 10px; border-top: 2px solid #222; border-left: 2px solid #222; transform: rotate(45deg); flex: none; box-shadow: -1px -1px 0 #fff; }
.help { align-self: center; margin: 0 8.500px 0 11.500px; width: 17px; height: 17px; border-radius: 50%; background: radial-gradient(circle at 50% 30%, #7aa6ee, #2b5fc8); color: #fff; font: 700 13px/17px "Liberation Sans", sans-serif; text-align: center; }

.ribbon { height: 105px; flex: none; display: flex; padding-top: 5px; background: #f0f0f0; }
.grp { position: relative; display: flex; flex-direction: column; height: 96px; flex: none; border-right: 1px solid #c6c6c6; }
.g1 { width: 199px; } .g2 { width: 411px; } .g3 { width: 193px; } .g4 { width: 104px; } .g5 { width: 52px; } .g6 { width: 58px; }
.g7 { width: 52px; } .g8 { width: 98px; } .g9 { width: 29px; } .g10 { width: 288px; } .g11 { width: 43px; } .g12 { width: 205px; }
.gend { flex: 1; border-right: 0; }
.body { flex: 1; display: flex; min-height: 0; }
.body.center { justify-content: center; }
.foot { position: relative; height: 20px; margin-top: auto; margin-bottom: -4px; padding-right: 20px; text-align: center; font-size: 14px; line-height: 18px; color: #0e7fa0; white-space: nowrap; overflow: visible; }
.foot .car { position: absolute; right: 8px; top: 6px; }
.gend .foot .car { right: 6px; }

.big { display: flex; flex-direction: column; align-items: center; flex: none; }
.bi { height: 36px; width: 100%; display: flex; align-items: center; justify-content: center; }
.bi svg { overflow: visible; }
.lb { font-size: 14px; line-height: 20px; white-space: nowrap; }
.lb.dim { color: #a8a8a8; }
.big .car { margin-top: 5px; }
.morebox { width: 38px; height: 35px; margin-top: -1px; margin-bottom: 2px; border: 1px solid #bbb; border-radius: 4px; display: flex; align-items: center; justify-content: center; }
.stack { display: flex; flex-direction: column; gap: 6px; flex: none; }
.si { display: flex; align-items: center; gap: 4px; height: 20px; font-size: 14px; line-height: 19px; white-space: nowrap; }
.skbox { width: 117px; height: 77px; display: grid; grid-template: 1fr 1fr / repeat(3, 1fr); place-items: center; background: #fbfbfb; border: 1px solid #bbb; }
.sk { width: 24px; height: 20px; }
.skarrows { width: 22px; height: 77px; position: relative; display: flex; flex-direction: column; align-items: center; gap: 20px; padding-top: 10px; }

.icons { padding-top: 2px; }
.irow { display: flex; align-items: center; height: 31px; }
.ic { width: 23.400px; height: 31px; flex: none; display: flex; align-items: center; justify-content: center; }
.vs { width: 1px; height: 20px; background: #c6c6c6; margin: 0 0 0 3px; flex: none; }
.xt { font: 700 15px/31px "Liberation Sans", sans-serif; color: #111; }
.tol { display: block; text-align: center; font: 700 8px/7px "Liberation Sans", sans-serif; white-space: nowrap; }
.tol b { display: block; color: #111; font-size: 9px; line-height: 10px; letter-spacing: -.5px; }
.tol em { display: block; color: #a11f2c; font-size: 7.500px; line-height: 6.500px; }
.tol u { text-decoration: none; color: #aaa; }
.xbox { display: block; width: 16px; height: 16px; border: 2px solid #a00; font: 700 11px/12px "Liberation Sans", sans-serif; text-align: center; color: #111; }
.xparen { font: 700 14px/18px "Liberation Sans", sans-serif; color: #111; white-space: nowrap; }
.xparen em { color: #a11f2c; font-weight: 400; font-size: 16px; }
.blu { font: 700 8px/10px "Liberation Sans", sans-serif; color: #1c2bc8; white-space: nowrap; }
.blu2 { display: block; text-align: center; font: 700 8px/8px "Liberation Sans", sans-serif; color: #1c2bc8; white-space: nowrap; }
.blu2 small { display: block; font-size: 7.500px; line-height: 8px; }
.blu2 sup { font-size: 5.500px; line-height: 0; }
.bino { display: block; text-align: center; font: 700 9px/9px "Liberation Sans", sans-serif; color: #222; white-space: nowrap; }
.bino em { color: #a11f2c; }
.bn { width: 16px; height: 9px; margin: 0 auto 1px; }

.toolbar { height: 37px; flex: none; display: flex; align-items: center; border-top: 1px solid #c0c0c0; border-bottom: 1px solid #999; background: #f0f0f0; padding-left: 10px; }
.menuic { width: 17px; height: 18px; }
.menut { margin-left: 3px; font-size: 14px; line-height: 20px; white-space: nowrap; }
.tsep { width: 1px; height: 26px; background: #c0c0c0; flex: none; }
.sep1 { margin: 0 13px 0 6px; }
.sep2 { margin: 0 7px 0 6px; }
.sep3 { margin-left: 8px; }
.combo { height: 24px; display: flex; align-items: center; justify-content: space-between; padding: 0 7px 0 2px; background: #fff; border: 1px solid #9a9a9a; font-size: 14px; line-height: 20px; flex: none; }
.c-a { width: 166px; margin-right: 10px; }
.c-b { width: 175px; }
.big-car { border-left-width: 5px; border-right-width: 5px; border-top-width: 6px; }
.tools { display: flex; align-items: center; margin-left: 1px; }
.tb { width: 25px; height: 24px; display: flex; align-items: center; justify-content: center; flex: none; }
.tb.act { background: #c3e1ec; outline: 1px solid #a8d1e0; }
.tc { width: 14px; display: flex; justify-content: center; flex: none; }
.endcar { margin-left: auto; margin-right: 6px; margin-top: 12px; }

.main { flex: 1; min-height: 0; display: flex; }
.rail { width: 32px; flex: none; display: flex; flex-direction: column; align-items: center; background: #bbb; border-right: 1px solid #9d9d9d; }
.ri { display: flex; align-items: center; justify-content: center; width: 100%; height: 36px; flex: none; }
.r-gear { height: 28px; }
.r-a { margin-top: 13px; } .r-b { margin-top: 9px; }
.r-c { margin: 3px -1px 0 2px; height: 45px; width: 31px; background: #f0f0f0; border: 1px solid #ccc; border-right: 0; position: relative; z-index: 1; }
.r-d { margin-top: 2px; } .r-e { margin-top: 19px; } .r-f { margin-top: 17px; } .r-g { margin-top: 18px; } .r-h { margin-top: 6px; } .r-i { margin-top: 7px; } .r-j { margin-top: 4px; }

.panel { width: 384px; flex: none; display: flex; flex-direction: column; padding: 0 9px 6px 6px; background: #f0f0f0; border-right: 1px solid #999; }
.phead { height: 32px; flex: none; display: flex; align-items: center; justify-content: space-between; padding: 0 7px 0 4px; font-size: 15px; line-height: 20px; }
.pmax { width: 14px; height: 13px; border: 1px solid #222; border-top-width: 2px; }
.tbl { flex: 1; min-height: 0; display: flex; flex-direction: column; border: 1px solid #bbb; border-bottom-color: #fff; padding: 0 1px 1px; background: #fff; }
.thead { height: 23px; flex: none; display: grid; grid-template-columns: 200px 100px 1fr; background: #f0f0f0; border-bottom: 1px solid #ddd; }
.th { position: relative; padding-left: 6px; font-size: 15px; line-height: 23px; border-right: 1px solid #ddd; color: #333; }
.th.c2 { padding-left: 7px; }
.th.c3 { border-right: 0; padding-left: 5px; }
.sort { position: absolute; left: 55px; top: 9px; border-left: 6px solid transparent; border-right: 6px solid transparent; border-bottom: 6px solid #222; }
.rows { flex: 1; min-height: 0; overflow: hidden; }
.tr { position: relative; height: 24px; display: grid; grid-template-columns: 200px 100px 1fr; background: #fafafa; border-bottom: 1px solid #e4e4e4; }
.tr:nth-child(even) { background: #f4f4f4; }
.td { display: flex; align-items: center; padding-left: 4px; padding-top: 2px; border-right: 1px solid #e4e4e4; min-width: 0; }
.td.c2 { padding-left: 7px; }
.td.c3 { border-right: 0; }
.nm { font-size: 15px; line-height: 20px; color: #2c2c2c; white-space: nowrap; }
.bold { font-weight: 700; }
.exp { position: relative; width: 11px; height: 11px; flex: none; background: #fff; border: 1px solid #ccc; z-index: 1; }
.exp::before { content: ""; position: absolute; left: 1px; right: 1px; top: 4px; height: 1px; background: #222; }
.exp.plus::after { content: ""; position: absolute; top: 1px; bottom: 1px; left: 4px; width: 1px; background: #222; }
.vl1::before { content: ""; position: absolute; left: 9px; top: -12px; height: 24px; border-left: 1px dotted #888; }
.ch .td.c1 { padding-left: 40px; }
.ch::before { content: ""; position: absolute; left: 28px; width: 12px; top: 12px; border-top: 1px dotted #888; }
.ch::after { content: ""; position: absolute; left: 28px; top: -1px; height: 25px; border-left: 1px dotted #888; }
.ch.last::after { height: 13px; }
.cb { width: 12px; height: 12px; flex: none; background: #fff; border: 1px solid #111; display: flex; align-items: center; justify-content: center; }
.cb svg { width: 10px; height: 10px; }
.hscroll { height: 20px; flex: none; display: flex; align-items: center; background: #f0f0f0; }
.chev { width: 8px; height: 8px; border-left: 2px solid #555; border-bottom: 2px solid #555; flex: none; }
.chev.left { transform: rotate(45deg); margin-left: 9px; margin-right: 4px; }
.chev.right { transform: rotate(-135deg); margin-left: 34px; }
.thumb { width: 292px; height: 20px; background: #cbcbcb; }
.pbar { height: 5px; flex: none; margin-top: 1px; background: #aaa; }
.sect { height: 28px; flex: none; display: flex; align-items: center; justify-content: space-between; padding: 1px 6px 0 7px; border-bottom: 2px solid #ccc; font-size: 18px; line-height: 24px; color: #1787ab; }
.vchev { width: 11px; height: 11px; border-right: 3.500px solid #0a6a85; border-bottom: 3.500px solid #0a6a85; transform: rotate(45deg); margin: -6px 2px 0 0; }

.work { flex: 1; min-width: 0; display: flex; flex-direction: column; }
.doctabs { height: 24px; flex: none; display: flex; background: #f0f0f0; }
.doc { width: 150px; flex: none; display: flex; align-items: center; padding-left: 6px; font-size: 15px; line-height: 20px; color: #222; white-space: nowrap; }
.doc span { margin-left: 4px; }
.doc .dm { margin-left: 6px; color: #333; }
.doc.on { background: #55a0bb; color: #fff; padding-left: 6px; }
.doc.on .dm { color: #fff; }
.dx { margin-left: 5px; font: 700 13px/20px "DejaVu Sans", sans-serif; color: #fff; }
.docstrip { height: 3px; flex: none; background: #55a0bb; }
.vp { flex: 1; min-height: 0; background: linear-gradient(#b6b7b8 0, #c9cacb 30%, #dadbdc 60%, #e7e8ea 85%); }
.scene { width: 100%; height: 100%; }
.plside { fill: url(#side); }
.pltop { fill: #ffb300; }
.edge { fill: none; stroke: #3c3a30; stroke-width: .8; }
.hud { fill: none; stroke: #e0cfc8; stroke-width: 1.200; }
.t-z { font: 13px "Liberation Sans", sans-serif; fill: #d8d8d8; }
.t-x { font: 13px "Liberation Sans", sans-serif; fill: #1a2ee0; }
.t-tz { font: 12px "Liberation Sans", sans-serif; fill: #2a4ae8; }
.t-tx { font: 12px "Liberation Sans", sans-serif; fill: #c03030; }

.status { height: 23px; flex: none; padding-left: 3px; background: #f0f0f0; border-top: 1px solid #a8a8a8; font-size: 14px; line-height: 22px; letter-spacing: .3px; word-spacing: 1px; text-shadow: .3px 0 #222; color: #222; white-space: nowrap; }

.ime { position: absolute; left: 1590px; top: 1048px; width: 249px; height: 31px; display: flex; align-items: center; gap: 12px; padding-left: 14px; background: #f3f5f8; border-top: 1px solid #c4d3e6; border-bottom: 1px solid #c4d3e6; }
.sogou { position: absolute; left: 1559px; top: 1045px; width: 37px; height: 34px; border-radius: 4px; background: #f4581c; transform: rotate(-8deg); color: #fff; font: italic 700 27px/34px "Liberation Sans", sans-serif; text-align: center; }
.wm { position: absolute; left: 1558px; top: 1052px; width: 281px; overflow: hidden; font: 16.500px/20px "Liberation Sans", sans-serif; color: rgba(180,180,180,.75); white-space: nowrap; }
```
